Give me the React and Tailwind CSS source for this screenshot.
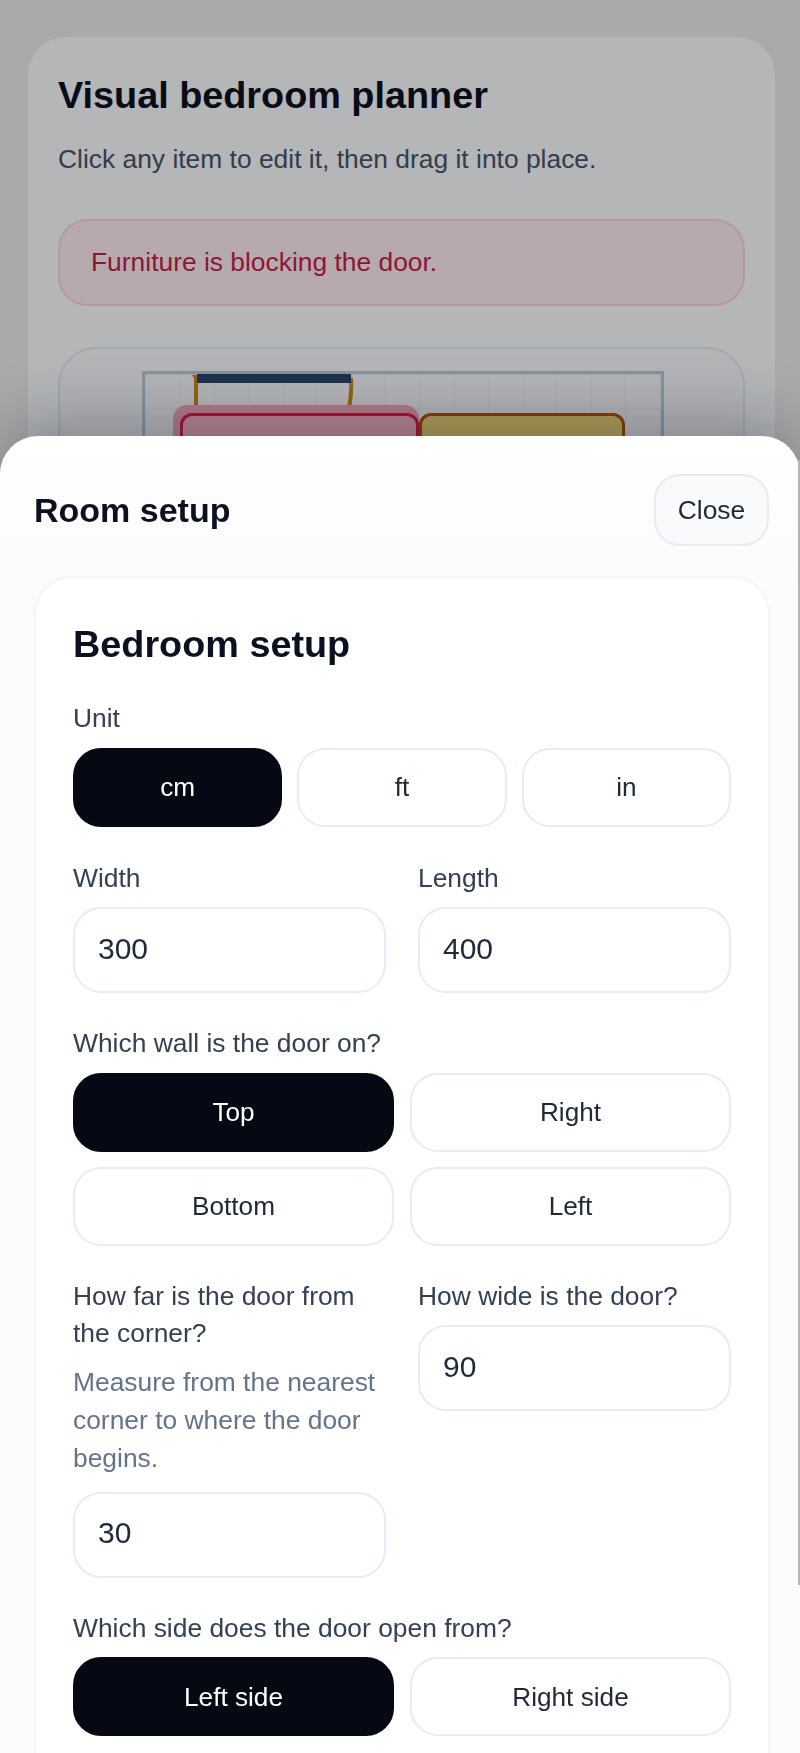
const font = { fontFamily: '"Liberation Sans", Arial, sans-serif' };

function Label({ children, className = "" }) {
  return <p className={`text-[26.4px] leading-[37.5px] text-[#334155] ${className}`}>{children}</p>;
}

function Choice({ active, children }) {
  return (
    <button
      className={
        active
          ? "h-[79px] rounded-[28px] border-2 border-[#050914] bg-[#050914] pt-[2px] text-[26.2px] text-white"
          : "h-[79px] rounded-[28px] border-2 border-[#e6ecf4] bg-white pt-[2px] text-[26.2px] text-[#1f2937]"
      }
    >
      {children}
    </button>
  );
}

function Field({ value }) {
  return (
    <div className="flex h-[86px] items-center rounded-[28px] border-2 border-[#e6ecf4] bg-white pb-[4px] pl-[23px] text-[30px] text-[#1e293b]">
      {value}
    </div>
  );
}

export default function App() {
  return (
    <div style={font} className="relative h-[1753px] w-[800px] overflow-hidden bg-[#ececec]">
      {/* page behind the sheet */}
      <div className="ml-[28px] mt-[37px] h-[900px] w-[747px] rounded-[38px] bg-[#fafcff] px-[30px] pt-[35px]">
        <h1 className="text-[37.8px] font-bold leading-[46px] text-[#0b1120]">Visual bedroom planner</h1>
        <p className="mt-[23px] text-[26.4px] leading-[37px] text-[#475569]">
          Click any item to edit it, then drag it into place.
        </p>
        <div className="mt-[41px] flex h-[87px] items-center rounded-[30px] border-2 border-[#fbd5dc] bg-[#fdecf1] pl-[31px] text-[26.4px] text-[#c81e4a]">
          Furniture is blocking the door.
        </div>
        <div className="relative mt-[41px] h-[400px] rounded-[38px] border-2 border-[#e2e8f2] bg-[#f8fafc]">
          {/* room canvas */}
          <div className="absolute left-[82px] top-[22px] h-[360px] w-[522px] border-[3px] border-[#bccadc] bg-[#f8fafc] bg-[linear-gradient(#e9eef4_1px,transparent_1px),linear-gradient(90deg,#e9eef4_1px,transparent_1px)] bg-[size:34.3px_34.3px]">
            <svg className="absolute left-[46px] top-0" width="170" height="40" viewBox="0 0 170 40" fill="none">
              <path d="M1 1 L6 1 L6 10 Z" fill="#c98a1c" />
              <path d="M5 4 V40" stroke="#c98a1c" strokeWidth="4" />
              <path d="M160 4 C161 18 159 30 157 40" stroke="#c98a1c" strokeWidth="4" />
              <rect x="6" y="0" width="154" height="9" fill="#2b4468" />
            </svg>
          </div>
          <div className="absolute left-[113px] top-[56px] h-[120px] w-[246px] rounded-[14px] bg-[#f5a8bd]" />
          <div className="absolute left-[120px] top-[64px] h-[120px] w-[239px] rounded-[12px] border-[3px] border-[#e11d48] bg-[#fbb8cb]" />
          <div className="absolute left-[359px] top-[64px] h-[120px] w-[206px] rounded-[12px] border-[3px] border-[#b45309] bg-[#f0d878]" />
        </div>
      </div>

      {/* dim layer */}
      <div className="absolute inset-0 bg-black/[0.28] backdrop-blur-[0.5px]" />

      {/* bottom sheet */}
      <div className="absolute left-0 top-[436px] h-[1400px] w-[800px] rounded-t-[38px] bg-[linear-gradient(#ffffff,#fbfbfc_160px)] shadow-[0_-16px_60px_rgba(15,23,42,0.28)]">
        <div className="flex items-start justify-between pl-[34px] pr-[31px] pt-[38px]">
          <h2 className="mt-[15px] text-[34px] font-bold leading-[42px] text-[#0b1120]">Room setup</h2>
          <button className="h-[72px] w-[115px] rounded-[26px] border-2 border-[#e6ecf4] bg-[#f8fafc] pt-[2px] text-[26.4px] text-[#1f2937]">
            Close
          </button>
        </div>

        <div className="ml-[34px] mt-[30px] h-[1300px] w-[736px] rounded-[38px] border-2 border-[#f3f5f8] bg-white px-[37px] pt-[44px]">
          <h3 className="text-[37.8px] font-bold leading-[44px] text-[#0b1120]">Bedroom setup</h3>

          <Label className="relative top-[1px] mt-[33px]">Unit</Label>
          <div className="mt-[11px] grid grid-cols-3 gap-[15px]">
            <Choice active>cm</Choice>
            <Choice>ft</Choice>
            <Choice>in</Choice>
          </div>

          <div className="mt-[32px] grid grid-cols-2 gap-[32px]">
            <div>
              <Label className="relative top-[1px]">Width</Label>
              <div className="mt-[11px]"><Field value="300" /></div>
            </div>
            <div>
              <Label className="relative top-[1px]">Length</Label>
              <div className="mt-[11px]"><Field value="400" /></div>
            </div>
          </div>

          <Label className="relative top-[1px] mt-[31px]">Which wall is the door on?</Label>
          <div className="mt-[11px] grid grid-cols-2 gap-x-[16px] gap-y-[15px]">
            <Choice active>Top</Choice>
            <Choice>Right</Choice>
            <Choice>Bottom</Choice>
            <Choice>Left</Choice>
          </div>

          <div className="mt-[32px] grid grid-cols-2 items-start gap-[32px]">
            <div>
              <Label>How far is the door from the corner?</Label>
              <p className="mt-[10px] text-[26.4px] leading-[38px] text-[#64748b]">
                Measure from the nearest corner to where the door begins.
              </p>
              <div className="mt-[15px]"><Field value="30" /></div>
            </div>
            <div>
              <Label>How wide is the door?</Label>
              <div className="mt-[10px]"><Field value="90" /></div>
            </div>
          </div>

          <Label className="relative top-[1px] mt-[31px]">Which side does the door open from?</Label>
          <div className="mt-[11px] grid grid-cols-2 gap-[16px]">
            <Choice active>Left side</Choice>
            <Choice>Right side</Choice>
          </div>
        </div>

        {/* scrollbar thumb */}
        <div className="absolute right-0 top-[24px] h-[1125px] w-[2px] bg-[#b4b4b4]" />
      </div>
    </div>
  );
}
